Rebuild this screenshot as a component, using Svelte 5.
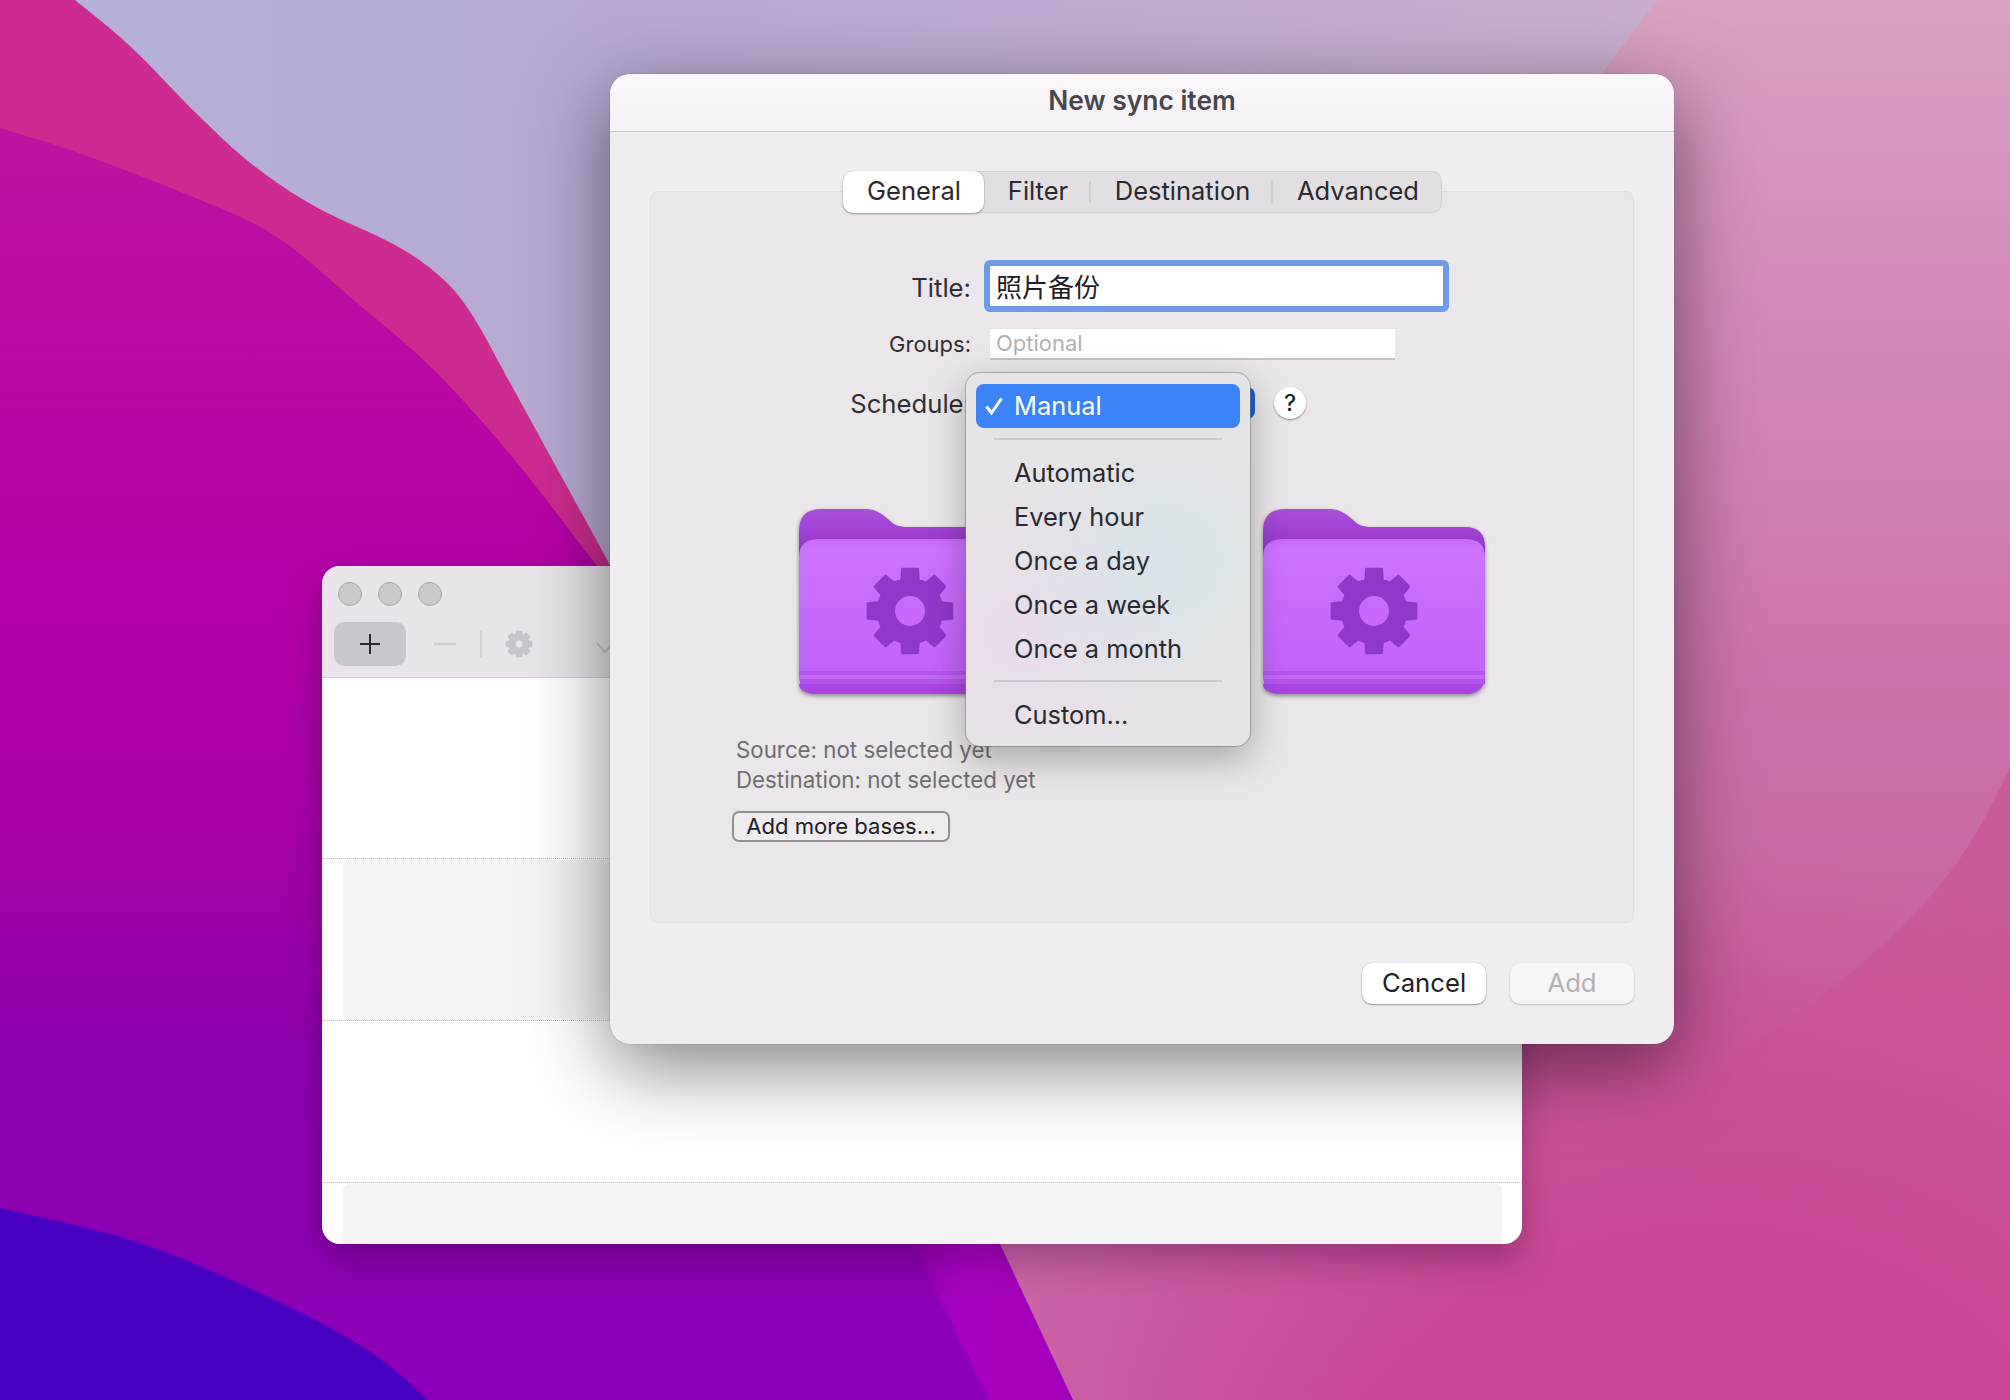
<script>
  function gear(cx, cy, r1, r2, hole) {
    const p = (r, deg) => {
      const t = ((deg - 90) * Math.PI) / 180;
      return (cx + r * Math.cos(t)).toFixed(2) + ' ' + (cy + r * Math.sin(t)).toFixed(2);
    };
    let d = '';
    for (let i = 0; i < 8; i++) {
      const a = i * 45;
      d += (i ? 'L' : 'M') + p(r2, a - 15) + 'L' + p(r1, a - 10) + 'L' + p(r1, a + 10) + 'L' + p(r2, a + 15);
      d += 'A' + r2 + ' ' + r2 + ' 0 0 1 ' + p(r2, a + 30);
    }
    d += 'Z';
    d += 'M' + (cx - hole) + ' ' + cy + 'a' + hole + ' ' + hole + ' 0 1 0 ' + 2 * hole + ' 0a' + hole + ' ' + hole + ' 0 1 0 ' + -2 * hole + ' 0Z';
    return d;
  }
  // smooth curve through wallpaper boundary points
  function curve(pts) {
    let d = 'M' + pts[0].join(' ');
    for (let i = 0; i < pts.length - 1; i++) {
      const a = pts[Math.max(i - 1, 0)];
      const b = pts[i];
      const c = pts[i + 1];
      const e = pts[Math.min(i + 2, pts.length - 1)];
      d += 'C' + (b[0] + (c[0] - a[0]) / 6).toFixed(1) + ' ' + (b[1] + (c[1] - a[1]) / 6).toFixed(1) + ' ' +
        (c[0] - (e[0] - b[0]) / 6).toFixed(1) + ' ' + (c[1] - (e[1] - b[1]) / 6).toFixed(1) + ' ' + c.join(' ');
    }
    return d;
  }
  const pinkEdge = curve([[75, 0], [130, 46], [198, 115], [253, 165], [316, 207], [395, 245], [443, 279], [474, 318], [514, 390], [609, 563], [640, 620]]);
  const magentaEdge = curve([[0, 128], [79, 153], [198, 199], [277, 237], [356, 302], [435, 371], [514, 459], [597, 566], [640, 620]]);
  const blueEdge = curve([[0, 1208], [140, 1243], [281, 1303], [372, 1353], [428, 1400]]);
  const pinkPath = 'M0 0H75' + pinkEdge.replace('M75 0', '') + 'V700H0Z';
  const magentaPath = magentaEdge + 'L1100 1400H0Z';
  const bluePath = blueEdge + 'H0Z';
  const deepEdge = curve([[2010, 768], [1975, 835], [1933, 893], [1860, 965], [1760, 1040], [1620, 1130], [1440, 1230], [1230, 1400]]);
  const deepPath = deepEdge + 'H2010Z';
  const bigGear = gear(111, 102, 42.5, 32, 16.5);
  const smallGear = gear(15, 15, 12.5, 9.5, 4.5);
  const tabs = ['General', 'Filter', 'Destination', 'Advanced'];
  const folders = [0, 1];
  const firstItems = ['Automatic', 'Every hour', 'Once a day', 'Once a week', 'Once a month'];
</script>

<div class="desktop">
  <svg class="wallpaper" viewBox="0 0 2010 1400" aria-hidden="true">
    <defs>
      <linearGradient id="sky" x1="0" y1="0" x2="1" y2="0">
        <stop offset="0" stop-color="#b4b2dc" />
        <stop offset="0.3" stop-color="#b7a9d2" />
        <stop offset="0.82" stop-color="#cbaed0" />
        <stop offset="1" stop-color="#d0a8c8" />
      </linearGradient>
      <linearGradient id="rose" x1="0" y1="0" x2="0" y2="1">
        <stop offset="0" stop-color="#d9a2c3" />
        <stop offset="0.22" stop-color="#d28abb" />
        <stop offset="0.5" stop-color="#cb72ab" />
        <stop offset="0.75" stop-color="#c8629e" />
        <stop offset="1" stop-color="#c96aac" />
      </linearGradient>
      <linearGradient id="rosedeep" gradientUnits="userSpaceOnUse" x1="1500" y1="1100" x2="1950" y2="850">
        <stop offset="0" stop-color="#cb5a98" stop-opacity="0" />
        <stop offset="1" stop-color="#cb5a98" />
      </linearGradient>
      <radialGradient id="rosefloor" gradientUnits="userSpaceOnUse" cx="1700" cy="1650" r="800">
        <stop offset="0" stop-color="#ca4592" />
        <stop offset="0.5" stop-color="#ca4592" />
        <stop offset="1" stop-color="#ca4592" stop-opacity="0" />
      </radialGradient>
      <linearGradient id="ridge" gradientUnits="userSpaceOnUse" x1="900" y1="0" x2="1010" y2="0">
        <stop offset="0" stop-color="#8e00b4" />
        <stop offset="0.6" stop-color="#a800c0" />
        <stop offset="1" stop-color="#a400bc" />
      </linearGradient>
      <linearGradient id="magenta" gradientUnits="userSpaceOnUse" x1="0" y1="128" x2="0" y2="1400">
        <stop offset="0" stop-color="#bc14a0" />
        <stop offset="0.34" stop-color="#b400a6" />
        <stop offset="0.59" stop-color="#a200a8" />
        <stop offset="0.73" stop-color="#8c00ae" />
        <stop offset="1" stop-color="#8c00b8" />
      </linearGradient>
    </defs>
    <rect width="2010" height="1400" fill="url(#sky)" />
    <path d={pinkPath} fill="#cc2c90" />
    <path d={magentaPath} fill="url(#magenta)" />
    <path d={bluePath} fill="#4a00c0" />
    <path d="M880 1180L990 1400H1100V1180Z" fill="url(#ridge)" />
    <path d="M1657 0L1603 72L1000 1244L1073 1400H2010V0Z" fill="url(#rose)" />
    <path d={deepPath} fill="url(#rosedeep)" />
    <path d="M1000 1244L1073 1400H2010V700H1300Z" fill="url(#rosefloor)" />
  </svg>

  <section class="window back">
    <header class="toolbar-area">
      <div class="lights">
        <span class="light"></span><span class="light"></span><span class="light"></span>
      </div>
      <div class="toolbar">
        <div class="add-tool">
          <svg width="24" height="24" viewBox="0 0 24 24"><path d="M12 2V22M2 12H22" stroke="#2c2a2e" stroke-width="2" /></svg>
        </div>
        <svg class="minus-tool" width="24" height="4" viewBox="0 0 24 4"><path d="M1 2H23" stroke="#cfccd2" stroke-width="2.5" /></svg>
        <span class="tool-sep"></span>
        <svg class="gear-tool" width="30" height="30" viewBox="0 0 30 30"><path d={smallGear} fill="#c7c4ca" fill-rule="evenodd" stroke="#c7c4ca" stroke-width="2" stroke-linejoin="round" /></svg>
        <svg class="chev-tool" width="20" height="12" viewBox="0 0 20 12"><path d="M2 1L10 10L18 1" fill="none" stroke="#c7c4ca" stroke-width="2" /></svg>
      </div>
    </header>
    <div class="rows">
      <div class="row r1"></div>
      <div class="row r2"><div class="panel"></div></div>
      <div class="row r3"></div>
      <div class="row r4"><div class="panel"></div></div>
    </div>
  </section>

  <section class="window dialog">
    <header class="titlebar">New sync item</header>
    <div class="content">
      <nav class="tabs">
        {#each tabs as tab, i}
          <div class="tab" class:active={i === 0} class:divided={i === 1 || i === 2}>{tab}</div>
        {/each}
      </nav>
      <div class="box">
        <div class="form-row title-row">
          <label class="lbl title-lbl" for="ttl">Title:</label>
          <div class="focus-field" id="ttl">照片备份</div>
        </div>
        <div class="form-row groups-row">
          <span class="lbl small">Groups:</span>
          <div class="groups-field">Optional</div>
        </div>
        <div class="form-row sched-row">
          <span class="lbl">Schedule:</span>
          <div class="popup"></div>
          <div class="help">?</div>
        </div>
        <div class="folders">
          {#each folders as f}
            <svg class="folder" width="222" height="187" viewBox="0 0 222 187">
              <defs>
                <linearGradient id={'back' + f} x1="0" y1="0" x2="0" y2="1">
                  <stop offset="0" stop-color="#a94fda" />
                  <stop offset="0.55" stop-color="#9a39cf" />
                  <stop offset="1" stop-color="#7f1eb8" />
                </linearGradient>
                <linearGradient id={'front' + f} x1="0" y1="0" x2="0" y2="1">
                  <stop offset="0" stop-color="#c66cfc" />
                  <stop offset="0.06" stop-color="#cc72ff" />
                  <stop offset="0.86" stop-color="#c263fa" />
                  <stop offset="1" stop-color="#bd5df5" />
                </linearGradient>
              </defs>
              <path d="M0 22Q0 0 22 0H66C78 0 84 6 90 11C95 16 100 18 108 18H202Q222 18 222 38V60H0Z" fill={'url(#back' + f + ')'} />
              <path d="M0 48Q0 30 20 30H202Q222 30 222 48V165Q222 185 202 185H20Q0 185 0 165Z" fill={'url(#front' + f + ')'} />
              <path d="M0 162H222V165Q222 185 202 185H20Q0 185 0 165Z" fill="#b655ee" />
              <path d="M0 166H222V170H0Z" fill="#c168f8" />
              <path d="M0 175H222V165Q222 185 202 185H20Q0 185 0 175Z" fill="#a945e2" />
              <path d={bigGear} fill="#8f38cb" fill-rule="evenodd" stroke="#8f38cb" stroke-width="3" stroke-linejoin="round" />
            </svg>
          {/each}
        </div>
        <p class="note first">Source: not selected yet</p>
        <p class="note">Destination: not selected yet</p>
        <div class="bases">Add more bases...</div>
      </div>
      <footer class="actions">
        <div class="btn">Cancel</div>
        <div class="btn disabled">Add</div>
      </footer>
    </div>

    <div class="menu">
      <div class="item selected">
        <svg class="tick" width="20" height="20" viewBox="0 0 20 20"><path d="M2.5 10.5L7.5 17L17.5 2.5" fill="none" stroke="#fff" stroke-width="3" /></svg>
        Manual
      </div>
      <hr />
      <div class="group">
        {#each firstItems as it}
          <div class="item">{it}</div>
        {/each}
      </div>
      <hr class="second" />
      <div class="item last">Custom...</div>
    </div>
  </section>
</div>

<style>
  :global(body) {
    margin: 0;
    background: #b5b0d8;
  }
  .desktop {
    position: relative;
    width: 2010px;
    height: 1400px;
    overflow: hidden;
    font-family: Inter, "Noto Sans CJK SC", "Liberation Sans", sans-serif;
    color: #242226;
  }
  .wallpaper {
    position: absolute;
    inset: 0;
    width: 2010px;
    height: 1400px;
  }
  .window {
    position: absolute;
    box-sizing: border-box;
  }

  /* back window */
  .back {
    left: 322px;
    top: 566px;
    width: 1200px;
    height: 678px;
    border-radius: 18px;
    background: #fff;
    display: flex;
    flex-direction: column;
    box-shadow: 0 16px 36px rgba(50, 0, 50, 0.32);
  }
  .toolbar-area {
    height: 112px;
    box-sizing: border-box;
    background: #e9e5eb;
    border-bottom: 1px solid #d6d3d7;
    border-radius: 18px 18px 0 0;
    padding: 16px 12px 0;
    flex: none;
  }
  .lights {
    display: flex;
    gap: 16px;
    padding-left: 4px;
  }
  .light {
    width: 24px;
    height: 24px;
    box-sizing: border-box;
    border-radius: 50%;
    background: #cbc7cc;
    border: 1px solid #aeabb0;
  }
  .toolbar {
    display: flex;
    align-items: center;
    margin-top: 16px;
    height: 44px;
  }
  .add-tool {
    width: 72px;
    height: 44px;
    border-radius: 10px;
    background: #cbc6cd;
    display: flex;
    align-items: center;
    justify-content: center;
  }
  .minus-tool {
    margin-left: 27px;
  }
  .tool-sep {
    width: 2px;
    height: 28px;
    background: #d6d3d7;
    margin-left: 23px;
  }
  .gear-tool {
    margin-left: 22px;
  }
  .chev-tool {
    margin-left: 61px;
    margin-top: 8px;
  }
  .rows {
    flex: 1;
    display: flex;
    flex-direction: column;
    min-height: 0;
  }
  .row {
    box-sizing: border-box;
    border-bottom: 1px dotted #c0c0c0;
    padding: 1px 20px 0 21px;
  }
  .r1 {
    height: 181px;
  }
  .r2 {
    height: 162px;
  }
  .r3 {
    height: 162px;
  }
  .r4 {
    flex: 1;
    border-bottom: 0;
    padding-top: 1px;
    padding-bottom: 0;
    display: flex;
    min-height: 0;
  }
  .panel {
    background: #f3f3f4;
    border-radius: 6px;
    height: 100%;
    flex: 1;
  }
  .r4 .panel {
    border-radius: 6px 6px 0 0;
  }

  /* dialog */
  .dialog {
    left: 610px;
    top: 74px;
    width: 1064px;
    height: 970px;
    border-radius: 20px;
    background: #efedf0;
    box-shadow: 0 22px 80px rgba(0, 0, 0, 0.5), 0 0 1px rgba(0, 0, 0, 0.5);
    display: flex;
    flex-direction: column;
  }
  .titlebar {
    height: 52px;
    padding-bottom: 5px;
    flex: none;
    box-sizing: content-box;
    background: linear-gradient(#faf6fa, #f6f1f6);
    border-bottom: 1px solid #cac7cb;
    border-radius: 20px 20px 0 0;
    font-size: 26.4px;
    font-weight: 600;
    color: #49474b;
    display: flex;
    align-items: center;
    justify-content: center;
  }
  .content {
    flex: 1;
    display: flex;
    flex-direction: column;
    padding: 39px 40px 40px 40px;
    min-height: 0;
  }
  .tabs {
    position: relative;
    z-index: 1;
    align-self: center;
    display: grid;
    grid-template-columns: 141px 107px 182px 169px;
    height: 42px;
    margin-bottom: -22px;
    box-sizing: border-box;
    background: #e2dfe2;
    border-radius: 10px;
    box-shadow: inset 0 0 0 1px #d6d3d7;
  }
  .tab {
    display: flex;
    align-items: center;
    justify-content: center;
    font-size: 25.5px;
    color: #2b292d;
    position: relative;
    box-sizing: border-box;
    padding: 0 0 3px 2px;
  }
  .tab.active {
    background: #fff;
    border-radius: 10px;
    box-shadow: 0 1px 2px rgba(0, 0, 0, 0.35), 0 0 1px rgba(0, 0, 0, 0.25);
  }
  .tab.divided::after {
    content: "";
    position: absolute;
    right: 0;
    top: 10px;
    height: 22px;
    width: 2px;
    background: #d2cfd3;
  }
  .box {
    box-sizing: border-box;
    height: 732px;
    background: #eae6e9;
    border: 1px solid #e2dfe2;
    border-radius: 8px;
    padding-top: 68px;
    display: flex;
    flex-direction: column;
  }
  .form-row {
    display: flex;
    align-items: center;
  }
  .lbl {
    width: 320px;
    flex: none;
    text-align: right;
    font-size: 25.7px;
    color: #302e32;
    margin-right: 13px;
    white-space: nowrap;
  }
  .title-lbl {
    padding-top: 3px;
  }
  .lbl.small {
    font-size: 22px;
  }
  .title-row {
    height: 52px;
  }
  .focus-field {
    width: 465px;
    height: 52px;
    box-sizing: border-box;
    border: 6px solid #6f9ae5;
    border-radius: 6px;
    background: #fff;
    padding-left: 6px;
    font-size: 26px;
    line-height: 40px;
    font-family: "Noto Sans CJK SC", sans-serif;
    color: #1f1d21;
  }
  .groups-row {
    height: 32px;
    margin-top: 16px;
  }
  .groups-field {
    width: 405px;
    height: 32px;
    box-sizing: border-box;
    margin-left: 6px;
    padding-left: 6px;
    background: #fff;
    border-bottom: 2px solid #c4c2c6;
    border-top: 1px solid #e4e2e5;
    font-size: 22px;
    line-height: 29px;
    color: #b3b1b5;
  }
  .sched-row {
    height: 32px;
    margin-top: 27px;
  }
  .popup {
    width: 271px;
    height: 32px;
    border-radius: 8px;
    background: #1a60c8;
  }
  .help {
    width: 32px;
    height: 32px;
    margin-left: 19px;
    border-radius: 50%;
    background: #fff;
    box-shadow: 0 1px 2px rgba(0, 0, 0, 0.4);
    display: flex;
    align-items: center;
    justify-content: center;
    font-size: 23px;
    font-weight: 500;
    color: #242226;
  }
  .folders {
    display: flex;
    justify-content: center;
    gap: 242px;
    margin-top: 90px;
  }
  .folder {
    display: block;
    filter: drop-shadow(0 2px 2px rgba(0, 0, 0, 0.4));
  }
  .note {
    margin: 0;
    padding-left: 85px;
    height: 30px;
    line-height: 30px;
    font-size: 22.3px;
    color: #6f6d71;
    white-space: nowrap;
  }
  .note.first {
    margin-top: 39px;
  }
  .bases {
    align-self: flex-start;
    margin: 16px 0 0 81px;
    width: 218px;
    height: 31px;
    box-sizing: border-box;
    border: 2px solid #918e94;
    border-radius: 7px;
    background: #efecef;
    font-size: 22.1px;
    line-height: 26px;
    text-align: center;
    color: #222024;
    white-space: nowrap;
  }
  .actions {
    display: flex;
    justify-content: flex-end;
    gap: 24px;
    margin-top: 40px;
  }
  .btn {
    width: 124px;
    height: 41px;
    border-radius: 10px;
    background: #fff;
    box-shadow: 0 1px 2px rgba(0, 0, 0, 0.35), 0 0 1px rgba(0, 0, 0, 0.25);
    font-size: 25.7px;
    line-height: 39px;
    text-align: center;
    color: #232125;
  }
  .btn.disabled {
    background: #f6f5f7;
    color: #b3b1b5;
    box-shadow: 0 1px 2px rgba(0, 0, 0, 0.2), 0 0 1px rgba(0, 0, 0, 0.12);
  }

  /* menu */
  .menu {
    position: absolute;
    left: 356px;
    top: 299px;
    width: 284px;
    height: 373px;
    box-sizing: border-box;
    padding: 11px 10px;
    border-radius: 14px;
    background:
      radial-gradient(circle at 70% 50%, rgba(214, 228, 232, 0.9), rgba(214, 228, 232, 0) 55%),
      radial-gradient(circle at 20% 70%, rgba(232, 220, 234, 0.9), rgba(232, 220, 234, 0) 50%),
      #e7e4e7;
    box-shadow: 0 0 0 1px rgba(120, 118, 122, 0.5), 0 12px 36px rgba(0, 0, 0, 0.3);
    display: flex;
    flex-direction: column;
    z-index: 2;
  }
  .menu hr {
    border: 0;
    height: 2px;
    background: #cbc9cc;
    margin: 10px 18px 0;
    flex: none;
  }
  .menu hr.second {
    margin-top: 9px;
  }
  .group {
    margin-top: 11px;
  }
  .item {
    height: 44px;
    line-height: 44px;
    padding-left: 38px;
    font-size: 25.4px;
    color: #2b292d;
    position: relative;
    white-space: nowrap;
  }
  .item.selected {
    background: #3a84f8;
    color: #fff;
    border-radius: 8px;
  }
  .item.last {
    margin-top: 11px;
  }
  .tick {
    position: absolute;
    left: 8px;
    top: 12px;
  }
</style>
